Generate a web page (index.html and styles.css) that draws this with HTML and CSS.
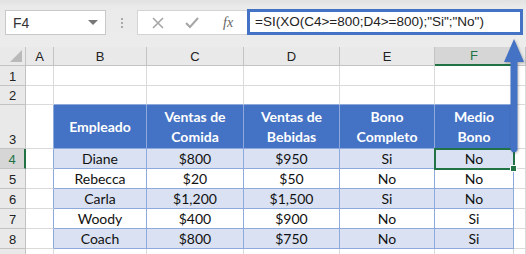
FILE: index.html
```html
<!DOCTYPE html>
<html lang="es">
<head>
    <meta charset="UTF-8">
    <title>SI con XO</title>
    <link rel="stylesheet" href="styles.css">
</head>
<body>
    <div class="toolbar">
        <div class="name-box">
            <span>F4</span>
            <span class="drop"></span>
        </div>
        <div class="grip"><i></i><i></i><i></i></div>
        <div class="fx-box">
            <svg class="ico" width="12" height="12" viewBox="0 0 12 12"><path d="M1 1 L11 11 M11 1 L1 11" stroke="#a6a6a6" stroke-width="1.6" fill="none"/></svg>
            <svg class="ico" width="14" height="12" viewBox="0 0 14 12"><path d="M1 6 L5 10 L13 1" stroke="#a6a6a6" stroke-width="2" fill="none"/></svg>
            <span class="fx">fx</span>
        </div>
        <div class="formula">=SI(XO(C4&gt;=800;D4&gt;=800);"Si";"No")</div>
    </div>

    <div class="sheet-wrap">
        <table class="sheet">
            <colgroup>
                <col class="c-hdr"><col class="c-a"><col class="c-b"><col class="c-c">
                <col class="c-d"><col class="c-e"><col class="c-f"><col>
            </colgroup>
            <tr class="col-heads">
                <th class="corner"><span></span></th>
                <th>A</th><th>B</th><th>C</th><th>D</th><th>E</th><th class="sel">F</th><th></th>
            </tr>
            <tr class="r1">
                <th>1</th><td></td><td></td><td></td><td></td><td></td><td></td><td></td>
            </tr>
            <tr class="r2">
                <th>2</th><td></td><td class="top"></td><td class="top"></td><td class="top"></td><td class="top"></td><td class="top"></td><td></td>
            </tr>
            <tr class="r3">
                <th>3</th><td class="edge"></td>
                <td class="head">Empleado</td>
                <td class="head">Ventas de<br>Comida</td>
                <td class="head">Ventas de<br>Bebidas</td>
                <td class="head">Bono<br>Completo</td>
                <td class="head">Medio<br>Bono</td>
                <td></td>
            </tr>
            <tr class="row band">
                <th class="sel">4</th><td class="edge"></td>
                <td>Diane</td><td>$800</td><td>$950</td><td>Si</td>
                <td class="active">No<span class="handle"></span></td><td></td>
            </tr>
            <tr class="row">
                <th>5</th><td class="edge"></td>
                <td>Rebecca</td><td>$20</td><td>$50</td><td>No</td><td>No</td><td></td>
            </tr>
            <tr class="row band">
                <th>6</th><td class="edge"></td>
                <td>Carla</td><td>$1,200</td><td>$1,500</td><td>Si</td><td>No</td><td></td>
            </tr>
            <tr class="row">
                <th>7</th><td class="edge"></td>
                <td>Woody</td><td>$400</td><td>$900</td><td>No</td><td>Si</td><td></td>
            </tr>
            <tr class="row band">
                <th>8</th><td class="edge"></td>
                <td>Coach</td><td>$800</td><td>$750</td><td>No</td><td>Si</td><td></td>
            </tr>
            <tr class="r9">
                <th></th><td></td><td></td><td></td><td></td><td></td><td></td><td></td>
            </tr>
        </table>
    </div>

    <!-- arrow pointing at the formula bar -->
    <svg class="arrow" width="22" height="118" viewBox="0 0 22 118">
        <path d="M11 0 L21 23 L14.5 23 L14.5 111 Q11 116 7.5 111 L7.5 23 L1 23 Z" fill="#4472c4"/>
    </svg>
</body>
</html>
```

FILE: styles.css
```css
body {
    margin: 0;
    width: 526px;
    height: 254px;
    overflow: hidden;
    background: #fff;
    font-family: Lato, "Liberation Sans", sans-serif;
    position: relative;
}

.toolbar {
    height: 47px;
    box-sizing: border-box;
    padding-top: 9px;
    display: flex;
    align-items: flex-start;
    background: linear-gradient(#e2e2e2 0, #eaeaea 7px, #ececec 100%);
}

.name-box {
    margin-left: 5px;
    margin-top: 1px;
    width: 101px;
    height: 25px;
    box-sizing: border-box;
    border: 1px solid #c8c8c8;
    background: #fff;
    display: flex;
    align-items: center;
    justify-content: space-between;
    padding: 0 7px 0 7px;
    font-family: "Liberation Sans", sans-serif;
    font-size: 14px;
    color: #333;
}

.drop {
    width: 0;
    height: 0;
    border-left: 5px solid transparent;
    border-right: 5px solid transparent;
    border-top: 5px solid #777;
}

.grip {
    width: 31px;
    height: 25px;
    display: flex;
    flex-direction: column;
    align-items: center;
    justify-content: center;
    gap: 2px;
    margin-top: 1px;
}

.grip i {
    width: 2px;
    height: 2px;
    background: #aaa;
}

.fx-box {
    margin-top: 1px;
    width: 110px;
    height: 25px;
    box-sizing: border-box;
    border: 1px solid #d4d4d4;
    border-right: none;
    background: #fff;
    display: flex;
    align-items: center;
    padding-left: 14px;
    gap: 21px;
}

.fx {
    font-family: "Liberation Serif", serif;
    font-style: italic;
    font-size: 14px;
    color: #666;
    margin-left: 3px;
}

.formula {
    width: 276px;
    height: 26px;
    box-sizing: border-box;
    border: 3px solid #4472c4;
    background: #fff;
    padding-left: 5px;
    font-family: "Liberation Sans", sans-serif;
    font-size: 13.5px;
    line-height: 20px;
    color: #222;
    white-space: nowrap;
}

.sheet-wrap {
    height: 207px;
    overflow: hidden;
}

.sheet {
    border-collapse: separate;
    border-spacing: 0;
    table-layout: fixed;
    width: 526px;
    font-size: 14px;
    color: #111;
}

.c-hdr { width: 26px; }
.c-a { width: 28px; }
.c-b { width: 93px; }
.c-c { width: 97px; }
.c-d { width: 96px; }
.c-e { width: 95px; }
.c-f { width: 79px; }

.sheet th,
.sheet td {
    padding: 0;
    box-sizing: border-box;
    border-right: 1px solid #dadada;
    border-bottom: 1px solid #dadada;
    text-align: center;
    white-space: nowrap;
}

.sheet th {
    background: #e9e9e9;
    font-weight: normal;
    font-family: "Liberation Sans", sans-serif;
    font-size: 13px;
    color: #222;
    border-right-color: #c3c3c3;
    border-bottom-color: #c3c3c3;
    vertical-align: bottom;
    padding-bottom: 1px;
}

.col-heads th {
    height: 19px;
    vertical-align: middle;
    padding: 0;
}

.col-heads th.sel {
    background: #d6d6d6;
    color: #217346;
    border-bottom: 2px solid #217346;
}

.corner {
    position: relative;
}

.corner span {
    position: absolute;
    right: 3px;
    bottom: 3px;
    width: 0;
    height: 0;
    border-left: 12px solid transparent;
    border-bottom: 12px solid #b9b9b9;
}

.r1 th, .r1 td { height: 20px; }
.r2 th, .r2 td { height: 19px; }
.r3 th, .r3 td { height: 44px; }
.row th, .row td { height: 20px; }
.r9 th, .r9 td { height: 6px; }

.row th.sel {
    background: #d6d6d6;
    color: #217346;
    border-right: 2px solid #217346;
}

.sheet td.top {
    border-bottom-color: #8ea9db;
}

.sheet td.edge {
    border-right-color: #8ea9db;
}

.sheet td.head {
    background: #4472c4;
    color: #fff;
    font-weight: bold;
    line-height: 20px;
    border-right-color: #8ea9db;
    border-bottom-color: #8ea9db;
}

.row td:nth-child(n+3):nth-child(-n+7) {
    border-right-color: #8ea9db;
    border-bottom-color: #8ea9db;
    line-height: 18px;
}

.row.band td:nth-child(n+3):nth-child(-n+7) {
    background: #d9e1f2;
}

.sheet td.active {
    position: relative;
    outline: 2px solid #217346;
    outline-offset: -1px;
}

.handle {
    position: absolute;
    right: -4px;
    bottom: -4px;
    width: 5px;
    height: 5px;
    background: #217346;
    border: 1px solid #fff;
}

.arrow {
    position: absolute;
    left: 503px;
    top: 39px;
    filter: drop-shadow(1px 1px 1px rgba(0, 0, 0, 0.25));
}
```
